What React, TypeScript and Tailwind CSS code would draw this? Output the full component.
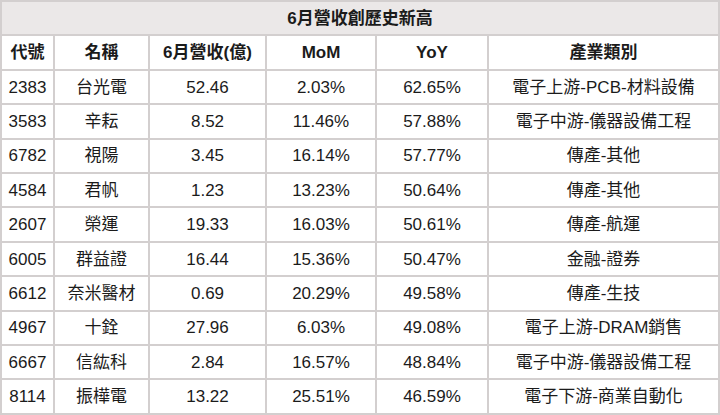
import React from "react";

const rows: [string, string, string, string, string, string][] = [
  ["2383", "台光電", "52.46", "2.03%", "62.65%", "電子上游-PCB-材料設備"],
  ["3583", "辛耘", "8.52", "11.46%", "57.88%", "電子中游-儀器設備工程"],
  ["6782", "視陽", "3.45", "16.14%", "57.77%", "傳產-其他"],
  ["4584", "君帆", "1.23", "13.23%", "50.64%", "傳產-其他"],
  ["2607", "榮運", "19.33", "16.03%", "50.61%", "傳產-航運"],
  ["6005", "群益證", "16.44", "15.36%", "50.47%", "金融-證券"],
  ["6612", "奈米醫材", "0.69", "20.29%", "49.58%", "傳產-生技"],
  ["4967", "十銓", "27.96", "6.03%", "49.08%", "電子上游-DRAM銷售"],
  ["6667", "信紘科", "2.84", "16.57%", "48.84%", "電子中游-儀器設備工程"],
  ["8114", "振樺電", "13.22", "25.51%", "46.59%", "電子下游-商業自動化"],
];

const headers = ["代號", "名稱", "6月營收(億)", "MoM", "YoY", "產業類別"];

export default function App() {
  return (
    <div
      className="w-[720px] h-[415px] bg-white text-[#1b1b1b] overflow-hidden"
      style={{ fontFamily: '"Liberation Sans", Arial, "Noto Sans CJK TC", sans-serif' }}
    >
      <table className="w-[720px] h-[415px] table-fixed border-collapse border-2 border-[#d3cfcf] text-[17px] leading-none">
        <colgroup>
          <col className="w-[53px]" />
          <col className="w-[95px]" />
          <col className="w-[117px]" />
          <col className="w-[110px]" />
          <col className="w-[112px]" />
          <col />
        </colgroup>
        <tbody>
          <tr className="h-[33px] bg-[#ebe8e8]">
            <td colSpan={6} className="border-2 border-[#d3cfcf] text-center font-bold p-0">
              6月營收創歷史新高
            </td>
          </tr>
          <tr className="h-[33px]">
            {headers.map((h) => (
              <td key={h} className="border-2 border-[#d3cfcf] text-center font-bold p-0">
                {h}
              </td>
            ))}
          </tr>
          {rows.map((r) => (
            <tr key={r[0]} className="h-[33px]">
              {r.map((c, i) => (
                <td key={i} className="border-2 border-[#d3cfcf] text-center p-0 whitespace-nowrap">
                  {c}
                </td>
              ))}
            </tr>
          ))}
        </tbody>
      </table>
    </div>
  );
}
